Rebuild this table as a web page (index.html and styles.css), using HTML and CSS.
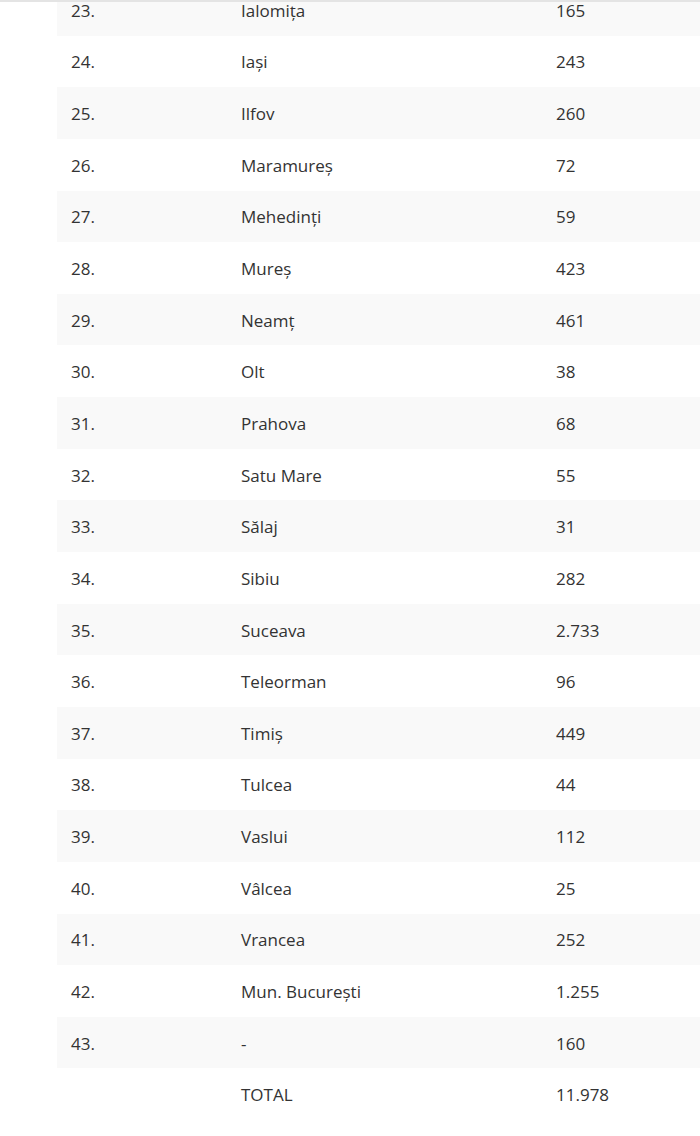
FILE: index.html
```html
<!DOCTYPE html>
<html lang="ro">
<head>
<meta charset="utf-8">
<title>Tabel județe</title>
<link rel="stylesheet" href="styles.css">
</head>
<body>
<div class="topline"></div>
<div class="wrap">
<table class="data">
<tbody>
<tr><td>23.</td><td>Ialomița</td><td>165</td></tr>
<tr><td>24.</td><td>Iași</td><td>243</td></tr>
<tr><td>25.</td><td>Ilfov</td><td>260</td></tr>
<tr><td>26.</td><td>Maramureș</td><td>72</td></tr>
<tr><td>27.</td><td>Mehedinți</td><td>59</td></tr>
<tr><td>28.</td><td>Mureș</td><td>423</td></tr>
<tr><td>29.</td><td>Neamț</td><td>461</td></tr>
<tr><td>30.</td><td>Olt</td><td>38</td></tr>
<tr><td>31.</td><td>Prahova</td><td>68</td></tr>
<tr><td>32.</td><td>Satu Mare</td><td>55</td></tr>
<tr><td>33.</td><td>Sălaj</td><td>31</td></tr>
<tr><td>34.</td><td>Sibiu</td><td>282</td></tr>
<tr><td>35.</td><td>Suceava</td><td>2.733</td></tr>
<tr><td>36.</td><td>Teleorman</td><td>96</td></tr>
<tr><td>37.</td><td>Timiș</td><td>449</td></tr>
<tr><td>38.</td><td>Tulcea</td><td>44</td></tr>
<tr><td>39.</td><td>Vaslui</td><td>112</td></tr>
<tr><td>40.</td><td>Vâlcea</td><td>25</td></tr>
<tr><td>41.</td><td>Vrancea</td><td>252</td></tr>
<tr><td>42.</td><td>Mun. București</td><td>1.255</td></tr>
<tr><td>43.</td><td>-</td><td>160</td></tr>
<tr><td></td><td>TOTAL</td><td>11.978</td></tr>
</tbody>
</table>
</div>
</body>
</html>
```
FILE: styles.css
```css
html, body {
  margin: 0;
  padding: 0;
  background: #ffffff;
}
body {
  font-family: "Open Sans", "Liberation Sans", sans-serif;
  font-size: 17px;
  color: #333333;
  overflow: hidden;
}
.topline {
  position: fixed;
  top: 0;
  left: 0;
  right: 0;
  height: 2px;
  background: #e4e4e4;
  z-index: 2;
}
.wrap {
  margin-top: -16px;
  margin-left: 57px;
  width: 643px;
  overflow: hidden;
}
.data {
  width: 100%;
  border-collapse: collapse;
  table-layout: fixed;
}
.data td {
  box-sizing: border-box;
  height: 51.65px;
  padding: 1px 14px 0 14px;
  vertical-align: middle;
  white-space: nowrap;
}
.data td:nth-child(1) { width: 170px; }
.data td:nth-child(2) { width: 315px; }
.data tr:nth-child(odd) td {
  background: #f9f9f9;
}
.data tr:last-child td {
  background: #ffffff;
}
```
